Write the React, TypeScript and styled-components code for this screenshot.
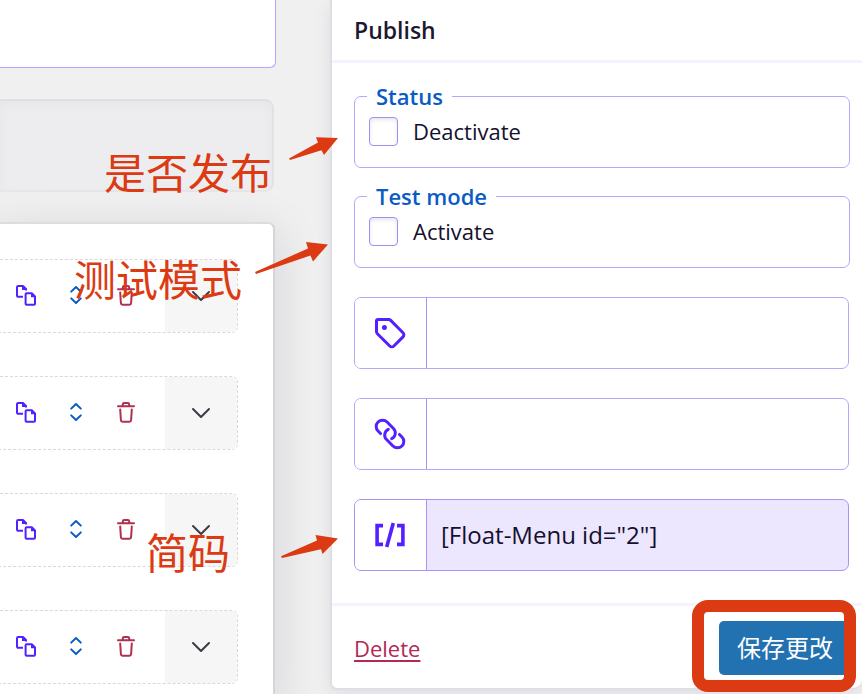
import React from 'react';
import styled, { createGlobalStyle } from 'styled-components';

const GlobalStyle = createGlobalStyle`
  *, *::before, *::after { box-sizing: border-box; }
  body {
    margin: 0;
    background: #f0f0f0;
    color: #14102e;
    font-family: 'Open Sans', 'Noto Sans', 'Noto Sans CJK SC', sans-serif;
    font-size: 22px;
    line-height: 32px;
  }
`;

const Page = styled.div`
  position: relative;
  display: grid;
  grid-template-columns: 276px minmax(0, 1fr);
  column-gap: 54px;
  height: 100vh;
  min-height: 694px;
  overflow: hidden;
`;

const Editor = styled.main`
  display: flex;
  flex-direction: column;
  min-width: 0;
`;

const TitleInput = styled.input`
  height: 68px;
  width: 100%;
  padding: 0 16px;
  border: 1px solid #b8a4fb;
  border-width: 0 1px 1px 0;
  border-radius: 0 0 6px 0;
  background: #fff;
  font: inherit;
`;

const Preview = styled.section`
  height: 93px;
  margin: 31px 2px 0 0;
  border: 2px solid #e2e2e6;
  border-top-color: #dfdfe4;
  border-bottom-color: #e6e6e9;
  border-left: 0;
  border-radius: 0 9px 9px 0;
  background: #ededef;
  box-shadow: inset 0 4px 12px rgba(20, 16, 60, 0.03);
`;

const ItemsPanel = styled.section`
  flex: 1;
  display: flex;
  flex-direction: column;
  gap: 43px;
  margin: 30px 1px 0 0;
  padding: 35px 35px 0 0;
  border-top: 2px solid #dcdce1;
  border-right: 2px solid #d4d4d9;
  border-radius: 0 7px 0 0;
  background: #fff;
  box-shadow: 0 12px 44px 6px rgba(20, 16, 60, 0.1);
`;

const ItemRow = styled.div`
  flex: none;
  display: flex;
  height: 74px;
  border: 1px dashed #d9d9d9;
  border-left: 0;
  border-radius: 0 6px 6px 0;
  overflow: hidden;
`;

const ItemActions = styled.div`
  flex: 1;
  display: grid;
  grid-template-columns: 50px 50px 50px;
  align-items: stretch;
  padding: 0 0 2px 1px;
`;

const IconButton = styled.button<{ $color: string }>`
  display: flex;
  align-items: center;
  justify-content: center;
  padding: 0;
  border: 0;
  background: transparent;
  color: ${({ $color }) => $color};
  cursor: pointer;
`;

const ExpandButton = styled(IconButton)`
  width: 72px;
  background: #f6f6f6;
`;

const PublishPanel = styled.aside`
  align-self: start;
  border: 2px solid #dedee4;
  border-width: 0 0 2px 2px;
  border-radius: 0 0 10px 7px;
  background: #fff;
  box-shadow: 0 4px 18px rgba(20, 16, 60, 0.08);
`;

const PanelTitle = styled.h2`
  margin: 0;
  padding: 14px 22px;
  color: #1b1830;
  font-size: 23px;
  font-weight: 600;
  line-height: 32px;
`;

const PanelBody = styled.div`
  display: flex;
  flex-direction: column;
  padding: 17px 12px 32px 22px;
  border: 3px solid #f5f3ff;
  border-width: 3px 0;
`;

const OptionGroup = styled.fieldset`
  height: 88px;
  margin: 0 0 12px;
  padding: 3px 14px 0;
  min-width: 0;
  border: 1px solid #b8a4fb;
  border-radius: 7px;
`;

const Legend = styled.legend`
  margin-left: -2px;
  padding: 0 9px;
  color: #0a5bc4;
  font-weight: 600;
`;

const CheckLabel = styled.label`
  display: flex;
  align-items: center;
  gap: 15px;
`;

const Checkbox = styled.input`
  appearance: none;
  flex: none;
  width: 29px;
  height: 29px;
  margin: 0;
  border: 1px solid #a68cf5;
  border-radius: 4px;
  background: #fff;
  box-shadow: inset 0 2px 4px rgba(0, 0, 0, 0.1);
`;

const Fields = styled.div`
  display: flex;
  flex-direction: column;
  gap: 29px;
  padding: 17px 1px 0 0;
`;

const Field = styled.label<{ $filled?: boolean }>`
  display: flex;
  height: 72px;
  border: 1px solid ${({ $filled }) => ($filled ? '#ab92f8' : '#b8a4fb')};
  border-radius: 7px;
  overflow: hidden;
  background: ${({ $filled }) => ($filled ? '#ece6fe' : '#fff')};
`;

const FieldIcon = styled.span`
  display: flex;
  align-items: center;
  justify-content: center;
  width: 72px;
  padding-right: 1px;
  border-right: 1px solid #ab92f8;
  background: #fff;
  color: #5320ff;
`;

const FieldInput = styled.input`
  flex: 1;
  min-width: 0;
  padding: 0 14px;
  border: 0;
  background: transparent;
  color: inherit;
  font: inherit;
  font-size: 24px;
`;

const PanelFooter = styled.footer`
  display: flex;
  align-items: center;
  justify-content: space-between;
  padding: 15px 12px 13px 22px;
`;

const DeleteLink = styled.a`
  color: #b02a56;
  text-decoration: underline;
  text-decoration-thickness: 2px;
  text-underline-offset: 3px;
`;

const SaveWrap = styled.div`
  position: relative;
  display: flex;
`;

const SaveButton = styled.button`
  height: 54px;
  padding: 0 17px 2px 18px;
  border: 0;
  border-radius: 5px;
  background: #2271b1;
  color: #fff;
  font: 24px/32px 'Noto Sans CJK SC', sans-serif;
  cursor: pointer;
`;

const SaveHighlight = styled.span`
  position: absolute;
  inset: -21px -6px -17px -27px;
  border: 12px solid #db3a12;
  border-radius: 16px;
  pointer-events: none;
`;

const Note = styled.span<{ $x: number; $y: number }>`
  position: absolute;
  left: ${({ $x }) => $x}px;
  top: ${({ $y }) => $y}px;
  color: #db3a12;
  font: 400 42px/48px 'Noto Sans CJK SC', sans-serif;
  white-space: nowrap;
  pointer-events: none;
`;

const Arrow = styled.svg<{ $x: number; $y: number }>`
  position: absolute;
  left: ${({ $x }) => $x}px;
  top: ${({ $y }) => $y}px;
  fill: #db3a12;
  pointer-events: none;
`;

const CopyIcon = () => (
  <svg width="22" height="22" viewBox="0 0 22 22" fill="none" stroke="currentColor" strokeWidth="2" strokeLinejoin="round" aria-hidden="true">
    <path d="M8 12.8H3.2A1.2 1.2 0 0 1 2 11.6V3.2A1.2 1.2 0 0 1 3.2 2H8l3 3v1.5" />
    <path d="M7 1.5V6H12z" fill="currentColor" stroke="none" />
    <path d="M11.6 9.2h5.2l3.2 3.2v7.4a1 1 0 0 1-1 1h-7.4a1 1 0 0 1-1-1v-9.6a1 1 0 0 1 1-1z" />
    <path d="M16 9v4.2h4.5z" fill="currentColor" stroke="none" />
  </svg>
);

const SortIcon = () => (
  <svg width="14" height="20" viewBox="0 0 14 20" fill="none" stroke="currentColor" strokeWidth="2" strokeLinecap="round" strokeLinejoin="round" aria-hidden="true">
    <path d="M2.2 6.6 7 2l4.8 4.6M2.2 13.4 7 18l4.8-4.6" />
  </svg>
);

const TrashIcon = () => (
  <svg width="20" height="22" viewBox="0 0 20 22" fill="none" stroke="currentColor" strokeWidth="2" strokeLinecap="round" strokeLinejoin="round" aria-hidden="true">
    <path d="M2 5.2h16M6.8 5V3.4A1.4 1.4 0 0 1 8.2 2h3.6a1.4 1.4 0 0 1 1.4 1.4V5" />
    <path d="M4.2 8.4 4.9 19a2 2 0 0 0 2 1.8h6.2a2 2 0 0 0 2-1.8l.7-10.6" />
  </svg>
);

const ChevronIcon = () => (
  <svg width="20" height="12" viewBox="0 0 20 12" fill="none" stroke="currentColor" strokeWidth="2" strokeLinecap="round" strokeLinejoin="round" aria-hidden="true">
    <path d="m2 2 8 8 8-8" />
  </svg>
);

const TagIcon = () => (
  <svg width="32" height="32" viewBox="0 0 32 32" fill="none" stroke="currentColor" strokeWidth="3" strokeLinejoin="round" aria-hidden="true">
    <path d="M4 2.5h10.6a3 3 0 0 1 2.1.9L29 15.7a3 3 0 0 1 0 4.2L19.9 29a3 3 0 0 1-4.2 0L3.4 16.7a3 3 0 0 1-.9-2.1V4A1.5 1.5 0 0 1 4 2.5z" />
    <circle cx="10.4" cy="10.4" r="2.5" fill="currentColor" stroke="none" />
  </svg>
);

const LinkIcon = () => (
  <svg width="34" height="34" viewBox="0 0 24 24" fill="none" stroke="currentColor" strokeWidth="2.1" strokeLinecap="round" strokeLinejoin="round" aria-hidden="true">
    <path d="M10.81 8.688a4.5 4.5 0 0 0-1.242 7.244l4.5 4.5a4.5 4.5 0 0 0 6.364-6.364l-1.757-1.757m-13.35-.622-1.757-1.757a4.5 4.5 0 0 1 6.364-6.364l4.5 4.5a4.5 4.5 0 0 1-1.242 7.244" />
  </svg>
);

const ShortcodeIcon = () => (
  <svg width="32" height="28" viewBox="0 0 32 28" fill="none" stroke="currentColor" aria-hidden="true">
    <path d="M9 4.6H3.1v18.8H9M23 4.6h5.9v18.8H23" strokeWidth="3.6" />
    <path d="m19.3 2-6.6 24" strokeWidth="3.6" />
  </svg>
);

const items = ['Item 1', 'Item 2', 'Item 3', 'Item 4'];

const options = [
  { legend: 'Status', label: 'Deactivate' },
  { legend: 'Test mode', label: 'Activate' },
];

export default function App() {
  return (
    <Page>
      <GlobalStyle />
      <Editor>
        <TitleInput type="text" aria-label="Title" />
        <Preview aria-label="Preview" />
        <ItemsPanel aria-label="Menu items">
          {items.map((item) => (
            <ItemRow key={item}>
              <ItemActions>
                <IconButton type="button" $color="#5320ff" aria-label={`Duplicate ${item}`}><CopyIcon /></IconButton>
                <IconButton type="button" $color="#0a5bc4" aria-label={`Move ${item}`}><SortIcon /></IconButton>
                <IconButton type="button" $color="#b0304f" aria-label={`Remove ${item}`}><TrashIcon /></IconButton>
              </ItemActions>
              <ExpandButton type="button" $color="#3c3c46" aria-label={`Expand ${item}`}><ChevronIcon /></ExpandButton>
            </ItemRow>
          ))}
        </ItemsPanel>
      </Editor>

      <PublishPanel>
        <PanelTitle>Publish</PanelTitle>
        <PanelBody>
          {options.map(({ legend, label }) => (
            <OptionGroup key={legend}>
              <Legend>{legend}</Legend>
              <CheckLabel>
                <Checkbox type="checkbox" />
                {label}
              </CheckLabel>
            </OptionGroup>
          ))}
          <Fields>
            <Field>
              <FieldIcon><TagIcon /></FieldIcon>
              <FieldInput type="text" aria-label="Tag" />
            </Field>
            <Field>
              <FieldIcon><LinkIcon /></FieldIcon>
              <FieldInput type="text" aria-label="Link" />
            </Field>
            <Field $filled>
              <FieldIcon><ShortcodeIcon /></FieldIcon>
              <FieldInput type="text" aria-label="Shortcode" readOnly value={'[Float-Menu id="2"]'} />
            </Field>
          </Fields>
        </PanelBody>
        <PanelFooter>
          <DeleteLink href="#delete">Delete</DeleteLink>
          <SaveWrap>
            <SaveButton type="button">保存更改</SaveButton>
            <SaveHighlight />
          </SaveWrap>
        </PanelFooter>
      </PublishPanel>

      <Note $x={104} $y={147}>是否发布</Note>
      <Note $x={74} $y={254}>测试模式</Note>
      <Note $x={146} $y={527}>简码</Note>
      <Arrow $x={289} $y={136} width="50" height="26" viewBox="0 0 50 26" aria-hidden="true">
        <path d="M0 22.5 29 6.5 27 1.2 49 2 35 19 32.5 14.2 1 24z" />
      </Arrow>
      <Arrow $x={255} $y={241} width="74" height="33" viewBox="0 0 74 33" aria-hidden="true">
        <path d="M0 31 53 7.5 51 1 73 3.4 58 20.5 55.5 14.5 1 33z" />
      </Arrow>
      <Arrow $x={281} $y={534} width="58" height="26" viewBox="0 0 58 26" aria-hidden="true">
        <path d="M0 22.2 36 6.5 34.5 1 57 4.5 41.5 20 40 15.2 1 24z" />
      </Arrow>
    </Page>
  );
}
